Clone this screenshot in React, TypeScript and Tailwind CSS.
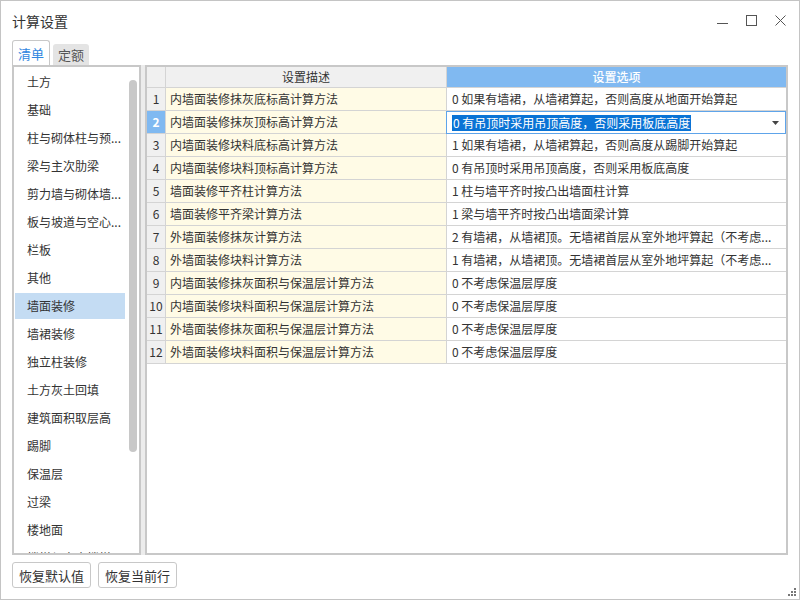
import React from "react";

const categories = [
  "土方",
  "基础",
  "柱与砌体柱与预...",
  "梁与主次肋梁",
  "剪力墙与砌体墙...",
  "板与坡道与空心...",
  "栏板",
  "其他",
  "墙面装修",
  "墙裙装修",
  "独立柱装修",
  "土方灰土回填",
  "建筑面积取层高",
  "踢脚",
  "保温层",
  "过梁",
  "楼地面",
  "楼梯与室内楼梯",
];

const rows = [
  ["内墙面装修抹灰底标高计算方法", "0 如果有墙裙，从墙裙算起，否则高度从地面开始算起"],
  ["内墙面装修抹灰顶标高计算方法", "0 有吊顶时采用吊顶高度，否则采用板底高度"],
  ["内墙面装修块料底标高计算方法", "1 如果有墙裙，从墙裙算起，否则高度从踢脚开始算起"],
  ["内墙面装修块料顶标高计算方法", "0 有吊顶时采用吊顶高度，否则采用板底高度"],
  ["墙面装修平齐柱计算方法", "1 柱与墙平齐时按凸出墙面柱计算"],
  ["墙面装修平齐梁计算方法", "1 梁与墙平齐时按凸出墙面梁计算"],
  ["外墙面装修抹灰计算方法", "2 有墙裙，从墙裙顶。无墙裙首层从室外地坪算起（不考虑..."],
  ["外墙面装修块料计算方法", "1 有墙裙，从墙裙顶。无墙裙首层从室外地坪算起（不考虑..."],
  ["内墙面装修抹灰面积与保温层计算方法", "0 不考虑保温层厚度"],
  ["内墙面装修块料面积与保温层计算方法", "0 不考虑保温层厚度"],
  ["外墙面装修抹灰面积与保温层计算方法", "0 不考虑保温层厚度"],
  ["外墙面装修块料面积与保温层计算方法", "0 不考虑保温层厚度"],
];

function WindowControls() {
  return (
    <div className="flex items-center gap-[18px] pr-[13px] text-[#555]">
      <svg width="11" height="11" viewBox="0 0 11 11">
        <line x1="0" y1="8.5" x2="11" y2="8.5" stroke="currentColor" strokeWidth="1" />
      </svg>
      <svg width="11" height="11" viewBox="0 0 11 11">
        <rect x="0.5" y="0.5" width="10" height="10" fill="none" stroke="currentColor" strokeWidth="1" />
      </svg>
      <svg width="11" height="11" viewBox="0 0 11 11">
        <path d="M0.5 0.5 L10.5 10.5 M10.5 0.5 L0.5 10.5" stroke="currentColor" strokeWidth="1" />
      </svg>
    </div>
  );
}

function CategoryList() {
  return (
    <div className="flex h-full w-[129px] border-2 border-[#c8c8c8] bg-white">
      <div className="flex-1 overflow-hidden pt-px">
        {categories.map((name, i) => (
          <div key={i} className="h-[28px] py-px pl-px">
            <div
              className={
                "flex h-[26px] w-[110px] items-center pl-[12px] text-[12px] leading-none text-[#333] " +
                (name === "墙面装修" ? "bg-[#c4dcf3]" : "")
              }
            >
              {name}
            </div>
          </div>
        ))}
      </div>
      <div className="w-[12px] pt-[13px] pl-[2px]">
        <div className="h-[372px] w-[8px] rounded-full bg-[#c8c8c8]" />
      </div>
    </div>
  );
}

function SettingsTable() {
  return (
    <div className="h-full flex-1 border-2 border-[#c8c8c8] bg-white text-[12px] leading-none text-[#333]">
      <div className="flex h-[21px] border-b border-[#d4d4d4]">
        <div className="w-[19px] border-r border-[#d4d4d4] bg-[#f0f0f0]" />
        <div className="flex w-[281px] items-center justify-center border-r border-[#d4d4d4] bg-[#f0f0f0]">
          设置描述
        </div>
        <div className="flex flex-1 items-center justify-center bg-[#80b9f1] font-medium text-white">
          设置选项
        </div>
      </div>
      {rows.map(([desc, opt], i) => {
        const selected = i === 1;
        return (
          <div key={i} className="flex h-[23px] border-b border-[#d4d4d4]">
            <div
              className={
                "flex w-[19px] items-center justify-center border-r border-[#d4d4d4] " +
                (selected ? "bg-[#80b9f1] font-bold text-white" : "bg-[#f0f0f0]")
              }
            >
              {i + 1}
            </div>
            <div className="flex w-[281px] items-center border-r border-[#d4d4d4] bg-[#fffbe6] pl-[4px]">
              {desc}
            </div>
            {selected ? (
              <div className="-mb-px -ml-px flex h-[23px] flex-1 items-center border border-[#5ea4ea] bg-white pr-[6px] pl-[5px]">
                <span className="bg-[#0a73d5] px-px py-[2px] text-white">{opt}</span>
                <svg className="ml-auto" width="7" height="4" viewBox="0 0 7 4">
                  <path d="M0 0 L7 0 L3.5 4 Z" fill="#444" />
                </svg>
              </div>
            ) : (
              <div className="flex flex-1 items-center pl-[5px]">{opt}</div>
            )}
          </div>
        );
      })}
    </div>
  );
}

export default function App() {
  return (
    <div className="relative flex h-[600px] w-[800px] flex-col border border-[#c4c4c4] bg-white font-['Noto_Sans_CJK_SC',sans-serif] text-[#333]">
      <div className="flex h-[39px] items-center justify-between pl-[11px]">
        <span className="text-[14px] leading-none">计算设置</span>
        <WindowControls />
      </div>

      <div className="flex h-[25px] items-end gap-[3px] px-[11px]">
        <div className="flex h-[25px] w-[38px] items-center justify-center rounded-t-[3px] border border-b-0 border-[#c8c8c8] bg-white text-[13px] leading-none text-[#2f86e0]">
          清单
        </div>
        <div className="flex h-[21px] w-[36px] items-center justify-center rounded-t-[3px] bg-[#e4e4e4] text-[13px] leading-none text-[#555]">
          定额
        </div>
      </div>

      <div className="flex h-[490px] px-[11px]">
        <CategoryList />
        <div className="w-[4px] bg-[#ececec]" />
        <SettingsTable />
      </div>

      <div className="flex gap-[7px] px-[11px] pt-[7px]">
        <button className="h-[26px] w-[79px] rounded-[3px] border border-[#c8c8c8] bg-white text-[13px] leading-none text-[#333]">
          恢复默认值
        </button>
        <button className="h-[26px] w-[79px] rounded-[3px] border border-[#c8c8c8] bg-white text-[13px] leading-none text-[#333]">
          恢复当前行
        </button>
      </div>

      <svg className="absolute right-[2px] bottom-[2px]" width="9" height="9" viewBox="0 0 9 9">
        <rect x="6" y="0" width="2" height="2" fill="#777" />
        <rect x="3" y="3" width="2" height="2" fill="#777" />
        <rect x="6" y="3" width="2" height="2" fill="#777" />
        <rect x="0" y="6" width="2" height="2" fill="#777" />
        <rect x="3" y="6" width="2" height="2" fill="#777" />
        <rect x="6" y="6" width="2" height="2" fill="#777" />
      </svg>
    </div>
  );
}
